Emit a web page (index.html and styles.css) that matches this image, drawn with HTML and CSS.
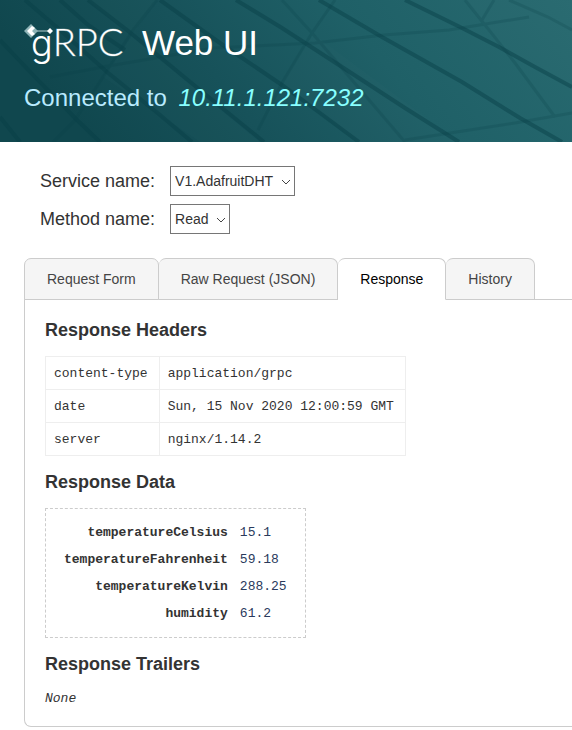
FILE: index.html
```html
<!DOCTYPE html>
<html lang="en">
<head>
<meta charset="utf-8">
<meta name="viewport" content="width=device-width, initial-scale=1">
<title>gRPC Web UI</title>
<link rel="stylesheet" href="styles.css">
</head>
<body>
<header class="banner">
  <svg class="banner-art" viewBox="0 0 572 142" preserveAspectRatio="xMidYMid slice" aria-hidden="true">
    <defs>
      <linearGradient id="teal" x1="0" y1="0.2" x2="1" y2="0">
        <stop offset="0" stop-color="#10474e"/>
        <stop offset="0.3" stop-color="#17525a"/>
        <stop offset="0.6" stop-color="#1f6067"/>
        <stop offset="1" stop-color="#286a70"/>
      </linearGradient>
    </defs>
    <rect width="572" height="142" fill="url(#teal)"/>
    <path class="facet" d="M157 0 103 77 200 142H260L88 0ZM332 3 282 83 359 142H459L312 33ZM465 0 499 47 572 87V0Z"/>
    <g class="beam-soft">
      <path d="M157 0 133 30 103 77 75 120 53 142"/>
      <path d="M335 0 312 33 282 83 258 130"/>
      <path d="M50 77 103 67 213 48 315 43 384 35 449 30 529 17"/>
      <path d="M282 0 312 33 352 80 405 142"/>
      <path d="M465 0 489 30 515 63 555 117"/>
      <path d="M494 0 482 20M405 140 515 123 572 113M509 0 548 17 572 30"/>
    </g>
    <g class="beam">
      <path d="M0 40 35 77 77 120 100 142M0 117 20 142"/>
      <path d="M25 0 60 30 107 72 160 115 192 142"/>
      <path d="M60 0 88 25 125 50M88 0 127 30 200 90 264 142"/>
      <path d="M160 0 220 43 282 85 320 113 359 142"/>
      <path d="M236 0 282 28 342 67 405 108 459 142"/>
      <path d="M319 0 382 37 462 82 520 118 562 142"/>
      <path d="M405 0 460 27 499 47 535 67 572 87"/>
    </g>
  </svg>
  <div class="banner-text">
    <h1 class="title">
      <svg class="logo" viewBox="0 -4 106 52" role="img" aria-label="gRPC">
        <text class="logo-word" x="7" y="35"><tspan class="logo-g">g</tspan>RPC</text>
        <path d="M8 10H26" stroke="#b5cfd1" stroke-width="1"/>
        <path d="M7 3 14 10 7 17 0 10Z" fill="#8fb4b7"/>
        <path d="M8 5 11 7 8 10 11 13 8 15 3 10Z" fill="#fff"/>
        <path d="M26 7 29 10 26 13 23 10Z" fill="#fff"/>
      </svg>
      <span>Web UI</span>
    </h1>
    <p class="target">Connected to <em>10.11.1.121:7232</em></p>
  </div>
</header>
<main>
  <form class="picker">
    <label for="service">Service name:</label>
    <span class="select-box">
      <select id="service"><option>V1.AdafruitDHT</option></select>
      <svg viewBox="0 0 9 6" aria-hidden="true"><path d="M0 1 4 5 8 1"/></svg>
    </span>
    <label for="method">Method name:</label>
    <span class="select-box">
      <select id="method"><option>Read</option></select>
      <svg viewBox="0 0 9 6" aria-hidden="true"><path d="M0 1 4 5 8 1"/></svg>
    </span>
  </form>
  <section class="tabs">
    <div class="tab-list" role="tablist">
      <button class="tab" type="button" role="tab">Request Form</button>
      <button class="tab" type="button" role="tab">Raw Request (JSON)</button>
      <button class="tab active" type="button" role="tab" aria-selected="true">Response</button>
      <button class="tab" type="button" role="tab">History</button>
    </div>
    <div class="panel" role="tabpanel">
      <h2>Response Headers</h2>
      <table class="headers">
        <tr><td>content-type</td><td>application/grpc</td></tr>
        <tr><td>date</td><td>Sun, 15 Nov 2020 12:00:59 GMT</td></tr>
        <tr><td>server</td><td>nginx/1.14.2</td></tr>
      </table>
      <h2>Response Data</h2>
      <table class="data">
        <tr><th scope="row">temperatureCelsius</th><td>15.1</td></tr>
        <tr><th scope="row">temperatureFahrenheit</th><td>59.18</td></tr>
        <tr><th scope="row">temperatureKelvin</th><td>288.25</td></tr>
        <tr><th scope="row">humidity</th><td>61.2</td></tr>
      </table>
      <h2>Response Trailers</h2>
      <p class="none">None</p>
    </div>
  </section>
</main>
</body>
</html>
```
FILE: styles.css
```css
* {
  box-sizing: border-box;
}

body {
  margin: 0;
  background: #fff;
  color: #333;
  font: 14px/20px "Liberation Sans", Arial, sans-serif;
}

h1, h2, p {
  margin: 0;
}

.banner {
  position: relative;
  overflow: hidden;
  background: #17525a;
}

.banner-art {
  position: absolute;
  inset: 0;
  width: 100%;
  height: 100%;
}

.facet {
  fill: #fff;
  opacity: 0.01;
}

.beam,
.beam-soft {
  fill: none;
  stroke: #083f47;
  stroke-width: 4;
  opacity: 0.45;
}

.beam-soft {
  stroke-width: 3;
  opacity: 0.2;
}

.banner-text {
  position: relative;
  padding: 17px 24px 28px;
}

.title {
  display: flex;
  align-items: center;
  gap: 12px;
  color: #fff;
  font-size: 35px;
  font-weight: 400;
  line-height: 52px;
}

.logo {
  width: 106px;
  height: 52px;
}

.logo-word {
  fill: #fff;
  stroke: #fff;
  stroke-width: 1px;
  stroke-opacity: 0.3;
  font: 300 38px Lato, sans-serif;
}

.logo-g {
  stroke: none;
  font-family: Inter, sans-serif;
  font-size: 36px;
}

.target {
  margin-top: 13px;
  color: #b9ebff;
  font-size: 24px;
  line-height: 32px;
}

.target em {
  margin-left: 5px;
  color: #8ff;
}

.picker {
  display: grid;
  grid-template-columns: max-content max-content;
  align-items: center;
  gap: 8px 15px;
  padding: 24px 40px;
}

.picker label {
  font-size: 18px;
}

.select-box {
  position: relative;
  justify-self: start;
}

.select-box select {
  display: block;
  height: 30px;
  padding: 0 20px 0 4px;
  border: 1px solid #767676;
  border-radius: 0;
  background: #fff;
  color: #333;
  font: inherit;
  appearance: none;
}

.select-box svg {
  position: absolute;
  top: 13px;
  right: 4px;
  width: 9px;
  height: 6px;
  fill: none;
  stroke: #444;
  pointer-events: none;
}

.tabs {
  padding-left: 24px;
}

.tab-list {
  display: flex;
  position: relative;
  margin-bottom: -1px;
}

.tab {
  height: 42px;
  padding: 0 22px;
  border: 1px solid #ccc;
  border-left-width: 0;
  border-radius: 7px 7px 0 0;
  background: #f5f5f5;
  color: #444;
  font: inherit;
}

.tab:first-child {
  border-left-width: 1px;
}

.tab.active {
  border-bottom-color: #fff;
  background: #fff;
  color: #000;
}

.panel {
  padding: 20px;
  border: 1px solid #ccc;
  border-width: 1px 0 1px 1px;
  border-radius: 0 0 0 7px;
}

.panel h2 {
  margin-bottom: 16px;
  font-size: 18px;
  line-height: 20px;
}

.headers,
.data,
.none {
  font-family: "Liberation Mono", "Courier New", monospace;
  font-size: 13px;
  line-height: 16px;
}

.headers {
  margin-bottom: 16px;
  border-collapse: collapse;
}

.headers td {
  padding: 9px 11px 7px 8px;
  border: 1px solid #eee;
}

.data {
  margin-bottom: 16px;
  padding: 10px 12px;
  border: 1px dashed #ccc;
  border-spacing: 0;
}

.data th,
.data td {
  padding: 6px 6px 5px;
}

.data th {
  text-align: right;
}

.data td {
  color: #2a3a5c;
}

.none {
  padding-top: 1px;
  margin-bottom: -1px;
  font-style: italic;
}
```
